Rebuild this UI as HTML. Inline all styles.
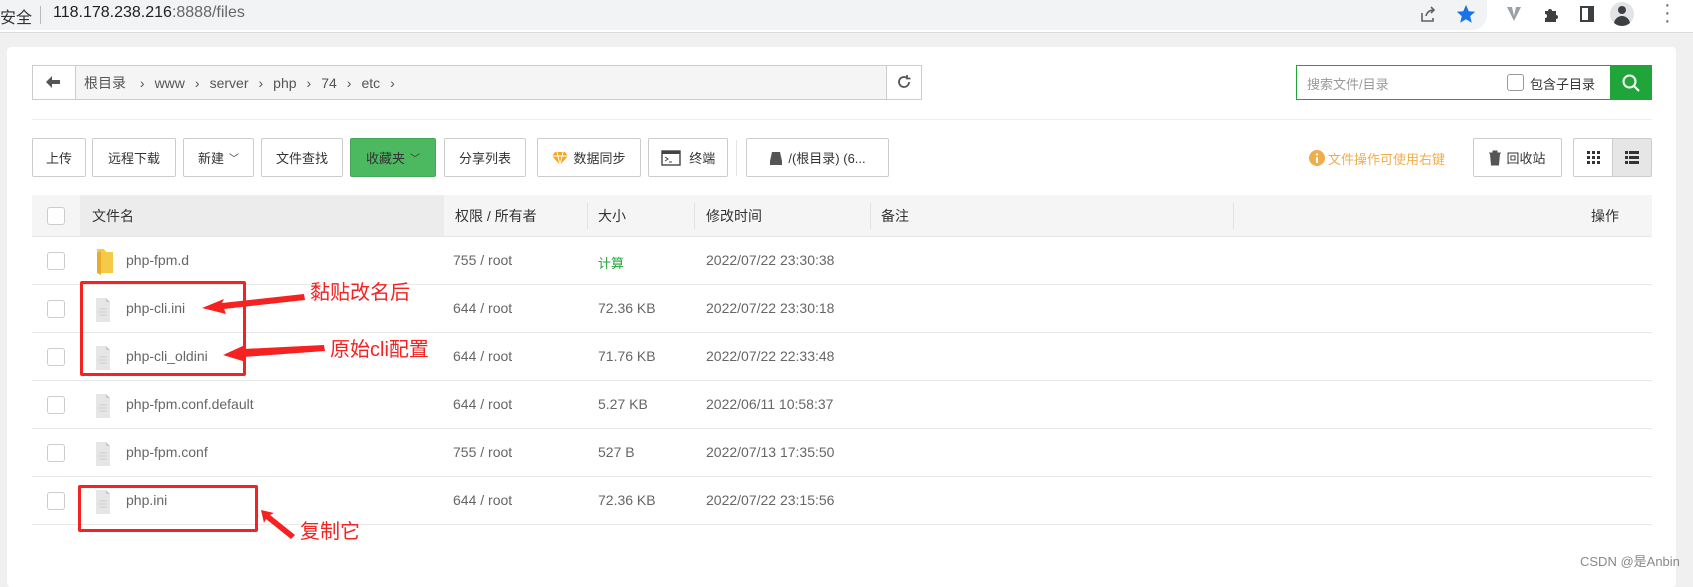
<!DOCTYPE html>
<html><head><meta charset="utf-8"><style>
*{margin:0;padding:0;box-sizing:border-box}
body{width:1693px;height:576px;background:#f0f0f0;font-family:"Liberation Sans","Noto Sans CJK SC",sans-serif;position:relative;overflow:hidden;color:#666;font-size:14px}
.a{position:absolute}
.top{left:0;top:0;width:1693px;height:33px;background:#fff;border-bottom:1px solid #dadce0}
.urlbar{left:-20px;top:0;width:1507px;height:30px;background:#f1f3f4;border-radius:0 0 15px 0}
.card{left:7px;top:47px;width:1669px;height:540px;background:#fff;border-radius:4px}
.btn{position:absolute;top:138px;height:39px;border:1px solid #ccc;border-radius:2px;background:#fff;font-size:13px;color:#333;display:flex;align-items:center;justify-content:center;gap:5px}
.hdr{left:32px;top:195px;width:1620px;height:42px;background:#f5f5f5;border-bottom:1px solid #e8e8e8}
.row{left:32px;width:1620px;height:48px;border-bottom:1px solid #e8e8e8}
.cb{position:absolute;left:15px;width:18px;height:18px;border:1px solid #ccc;border-radius:3px;background:#fff}
.t{position:absolute;white-space:nowrap}
.red{position:absolute;border:3px solid #f52222;border-radius:2px}
.ann{position:absolute;color:#f52222;font-size:20px;white-space:nowrap}
.sep{position:absolute;top:8px;width:1px;height:26px;background:#e3e3e3}
</style></head><body>
<div class="a top"></div>
<div class="a urlbar"></div>
<div class="t" style="left:0;top:4px;font-size:16px;color:#333">安全</div>
<div class="a" style="left:40px;top:6px;width:1px;height:18px;background:#bbb"></div>
<div class="t" style="left:53px;top:4px;font-size:16px;color:#202124">118.178.238.216<span style="color:#666">:8888/files</span></div>
<svg class="a" style="left:1418px;top:4px" width="20" height="20" viewBox="0 0 20 20"><path d="M4 9v8h11v-3M8 12c1-4 4-6 8-6M13 3l3 3-3 3" fill="none" stroke="#5f6368" stroke-width="1.6"/></svg>
<svg class="a" style="left:1455px;top:3px" width="22" height="22" viewBox="0 0 24 24"><path d="M12 2l3 7 7 .6-5.4 4.7 1.7 7.2L12 17.7 5.7 21.5l1.7-7.2L2 9.6 9 9z" fill="#1a73e8"/></svg>
<svg class="a" style="left:1505px;top:5px" width="18" height="18" viewBox="0 0 18 18"><path d="M2 2h5l2 9 2-9h5l-7 14z" fill="#9aa0a6"/></svg>
<svg class="a" style="left:1542px;top:4px" width="20" height="20" viewBox="0 0 20 20"><path d="M3 7h3a2 2 0 1 1 4 0h4v4a2 2 0 1 1 0 4v3H3v-4a2 2 0 1 0 0-4z" fill="#3c4043"/></svg>
<div class="a" style="left:1580px;top:6px;width:14px;height:16px;border:2px solid #3c4043;border-right-width:6px"></div>
<div class="a" style="left:1610px;top:2px;width:24px;height:24px;border-radius:50%;background:#e1e3e7;overflow:hidden"><div class="a" style="left:8px;top:4px;width:8px;height:8px;border-radius:50%;background:#3c4043"></div><div class="a" style="left:4px;top:14px;width:16px;height:12px;border-radius:8px 8px 0 0;background:#3c4043"></div></div>
<div class="t" style="left:1664px;top:1px;font-size:20px;color:#5f6368;line-height:8px;width:6px;text-align:center">·<br>·<br>·</div>

<div class="a card"></div>
<div class="a" style="left:32px;top:65px;width:890px;height:35px;border:1px solid #ccc;background:#f5f5f5"></div>
<div class="a" style="left:32px;top:65px;width:44px;height:35px;border:1px solid #ccc;background:#fff"></div>
<svg class="a" style="left:45px;top:75px" width="16" height="14" viewBox="0 0 16 14"><path d="M1 7l6-6v4h8v4H7v4z" fill="#555"/></svg>
<div class="t" style="left:84px;top:73px;font-size:14px;color:#555">根目录 <span style="margin:0 10px">›</span>www<span style="margin:0 10px">›</span>server<span style="margin:0 10px">›</span>php<span style="margin:0 10px">›</span>74<span style="margin:0 10px">›</span>etc<span style="margin:0 10px">›</span></div>
<div class="a" style="left:886px;top:65px;width:36px;height:35px;border:1px solid #ccc;background:#fff"></div>
<svg class="a" style="left:895px;top:73px" width="18" height="18" viewBox="0 0 18 18"><path d="M14 9a5 5 0 1 1-2-4M12 2v3.5h3.5" fill="none" stroke="#555" stroke-width="1.8"/></svg>
<div class="a" style="left:1296px;top:65px;width:356px;height:35px;border:1px solid #20a53a;background:#fff"></div>
<div class="t" style="left:1307px;top:74px;font-size:13px;color:#999">搜索文件/目录</div>
<div class="a" style="left:1507px;top:74px;width:17px;height:17px;border:1px solid #999;border-radius:3px"></div>
<div class="t" style="left:1530px;top:74px;font-size:13px;color:#333">包含子目录</div>
<div class="a" style="left:1610px;top:65px;width:42px;height:35px;background:#20a53a"></div>
<svg class="a" style="left:1621px;top:73px" width="20" height="20" viewBox="0 0 20 20"><circle cx="8.5" cy="8.5" r="6" fill="none" stroke="#fff" stroke-width="2"/><path d="M13 13l5 5" stroke="#fff" stroke-width="2"/></svg>
<div class="a" style="left:32px;top:119px;width:1620px;height:1px;background:#eee"></div>
<div class="btn" style="left:32px;width:54px">上传</div>
<div class="btn" style="left:92px;width:84px">远程下载</div>
<div class="btn" style="left:183px;width:71px">新建 <span style="font-size:10px">﹀</span></div>
<div class="btn" style="left:261px;width:82px">文件查找</div>
<div class="btn" style="left:350px;width:86px;background:#4cb860;border-color:#44a856;color:#333">收藏夹 <span style="font-size:10px">﹀</span></div>
<div class="btn" style="left:444px;width:82px">分享列表</div>
<div class="btn" style="left:537px;width:104px"><svg width="16" height="14" viewBox="0 0 16 14"><path d="M3 1h10l3 4-8 9-8-9z" fill="#f5a623"/><path d="M0 5h16M5 1l3 13 3-13" stroke="#fff" stroke-width="1" fill="none"/></svg>数据同步</div>
<div class="btn" style="left:648px;width:80px"><svg width="20" height="16" viewBox="0 0 20 16"><rect x="1" y="1" width="18" height="14" fill="#fff" stroke="#444" stroke-width="1.4"/><rect x="1" y="1" width="18" height="3" fill="#444"/><path d="M4 7l3 2-3 2M8 12h3" stroke="#444" fill="none"/></svg>&nbsp;终端</div>
<div class="a" style="left:736px;top:140px;width:1px;height:36px;background:#e5e5e5"></div>
<div class="btn" style="left:746px;width:143px"><svg width="14" height="14" viewBox="0 0 14 14"><path d="M3 1h8l2 9H1z" fill="#555"/><rect x="1" y="10" width="12" height="4" fill="#555"/></svg>/(根目录) (6...</div>
<svg class="a" style="left:1309px;top:150px" width="16" height="16"><circle cx="8" cy="8" r="8" fill="#f0ad4e"/><rect x="7" y="7" width="2" height="6" fill="#fff"/><circle cx="8" cy="4.5" r="1.2" fill="#fff"/></svg>
<div class="t" style="left:1328px;top:149px;font-size:13px;color:#f0ad4e">文件操作可使用右键</div>
<div class="btn" style="left:1473px;width:89px"><svg width="12" height="16" viewBox="0 0 12 16"><path d="M0 3h12M4 3V1h4v2M1.5 4h9l-1 11h-7z" stroke="#555" fill="#555" stroke-width="1"/></svg>回收站</div>
<div class="btn" style="left:1573px;width:40px;border-radius:2px 0 0 2px"><svg width="13" height="13"><g fill="#333"><rect x="0" y="0" width="3" height="3"/><rect x="5" y="0" width="3" height="3"/><rect x="10" y="0" width="3" height="3"/><rect x="0" y="5" width="3" height="3"/><rect x="5" y="5" width="3" height="3"/><rect x="10" y="5" width="3" height="3"/><rect x="0" y="10" width="3" height="3"/><rect x="5" y="10" width="3" height="3"/><rect x="10" y="10" width="3" height="3"/></g></svg></div>
<div class="btn" style="left:1612px;width:40px;background:#e6e6e6;border-radius:0 2px 2px 0"><svg width="14" height="13"><g fill="#333"><rect x="0" y="0" width="3" height="3"/><rect x="4" y="0" width="10" height="3"/><rect x="0" y="5" width="3" height="3"/><rect x="4" y="5" width="10" height="3"/><rect x="0" y="10" width="3" height="3"/><rect x="4" y="10" width="10" height="3"/></g></svg></div>
<div class="a hdr">
<div class="cb" style="top:12px"></div>
<div class="a" style="left:48px;top:0;width:364px;height:41px;background:#ececec"></div>
<div class="t" style="left:60px;top:11px;color:#333">文件名</div>
<div class="t" style="left:423px;top:11px;color:#333">权限 / 所有者</div>
<div class="sep" style="left:555px"></div>
<div class="t" style="left:566px;top:11px;color:#333">大小</div>
<div class="sep" style="left:662px"></div>
<div class="t" style="left:674px;top:11px;color:#333">修改时间</div>
<div class="sep" style="left:838px"></div>
<div class="t" style="left:849px;top:11px;color:#333">备注</div>
<div class="sep" style="left:1201px"></div>
<div class="t" style="left:1559px;top:11px;color:#333">操作</div>
</div>
<div class="a row" style="top:237px"><div class="cb" style="top:15px"></div>
<svg class="a" style="left:63px;top:10px" width="20" height="28" viewBox="0 0 20 28"><path d="M2 2h7l2 3h7v21H2z" fill="#f7c948"/><path d="M2 26V6l4-2v24z" fill="#e8ae2a"/></svg>
<div class="t" style="left:94px;top:15px">php-fpm.d</div><div class="t" style="left:421px;top:15px">755 / root</div><div class="t" style="left:566px;top:16px;color:#20a53a;font-size:13px">计算</div><div class="t" style="left:674px;top:15px">2022/07/22 23:30:38</div></div>
<div class="a row" style="top:285px"><div class="cb" style="top:15px"></div><div class="t" style="left:94px;top:15px">php-cli.ini</div><div class="t" style="left:421px;top:15px">644 / root</div><div class="t" style="left:566px;top:15px">72.36 KB</div><div class="t" style="left:674px;top:15px">2022/07/22 23:30:18</div></div>
<div class="a row" style="top:333px"><div class="cb" style="top:15px"></div><div class="t" style="left:94px;top:15px">php-cli_oldini</div><div class="t" style="left:421px;top:15px">644 / root</div><div class="t" style="left:566px;top:15px">71.76 KB</div><div class="t" style="left:674px;top:15px">2022/07/22 22:33:48</div></div>
<div class="a row" style="top:381px"><div class="cb" style="top:15px"></div><div class="t" style="left:94px;top:15px">php-fpm.conf.default</div><div class="t" style="left:421px;top:15px">644 / root</div><div class="t" style="left:566px;top:15px">5.27 KB</div><div class="t" style="left:674px;top:15px">2022/06/11 10:58:37</div></div>
<div class="a row" style="top:429px"><div class="cb" style="top:15px"></div><div class="t" style="left:94px;top:15px">php-fpm.conf</div><div class="t" style="left:421px;top:15px">755 / root</div><div class="t" style="left:566px;top:15px">527 B</div><div class="t" style="left:674px;top:15px">2022/07/13 17:35:50</div></div>
<div class="a row" style="top:477px"><div class="cb" style="top:15px"></div><div class="t" style="left:94px;top:15px">php.ini</div><div class="t" style="left:421px;top:15px">644 / root</div><div class="t" style="left:566px;top:15px">72.36 KB</div><div class="t" style="left:674px;top:15px">2022/07/22 23:15:56</div></div>
<svg class="a" style="left:0;top:0" width="1693" height="576">
<defs><g id="f"><path d="M0 0h10l4 4v20H0z" fill="#e6e6e6"/><path d="M10 0v4h4z" fill="#c8c8c8"/><path d="M3 11h8M3 14h8M3 17h8" stroke="#cfcfcf"/></g></defs>
<use href="#f" x="96" y="298"/><use href="#f" x="96" y="346"/><use href="#f" x="96" y="394"/><use href="#f" x="96" y="442"/><use href="#f" x="96" y="490"/>
<g fill="#f52222">
<path d="M304 294L222 303L224 299L202 308L226 314L224 309L305 300z"/>
<path d="M324 345L243 349L245 345L223 355L246 362L244 357L325 351z"/>
<path d="M295 535L270 515L274 513L261 510L264 523L266 519L291 539z"/>
</g>
</svg>
<div class="red" style="left:80px;top:281px;width:166px;height:95px"></div>
<div class="red" style="left:78px;top:485px;width:180px;height:47px"></div>
<div class="ann" style="left:310px;top:276px">黏贴改名后</div>
<div class="ann" style="left:330px;top:333px">原始cli配置</div>
<div class="ann" style="left:300px;top:515px">复制它</div>
<div class="t" style="left:1580px;top:551px;font-size:13px;color:#888">CSDN @是Anbin</div>
</body></html>
